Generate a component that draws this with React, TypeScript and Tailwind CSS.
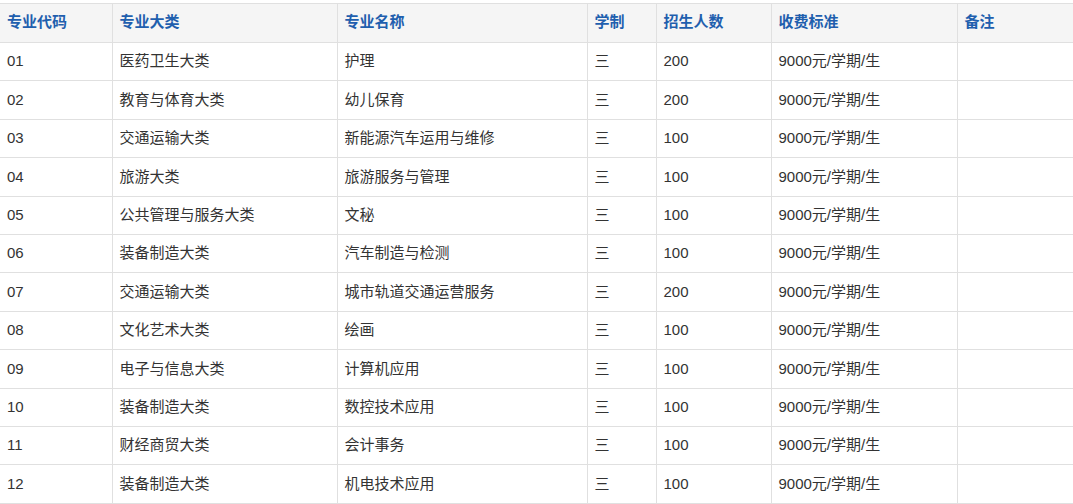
const rows = [
  ["01","医药卫生大类","护理","200"],
  ["02","教育与体育大类","幼儿保育","200"],
  ["03","交通运输大类","新能源汽车运用与维修","100"],
  ["04","旅游大类","旅游服务与管理","100"],
  ["05","公共管理与服务大类","文秘","100"],
  ["06","装备制造大类","汽车制造与检测","100"],
  ["07","交通运输大类","城市轨道交通运营服务","200"],
  ["08","文化艺术大类","绘画","100"],
  ["09","电子与信息大类","计算机应用","100"],
  ["10","装备制造大类","数控技术应用","100"],
  ["11","财经商贸大类","会计事务","100"],
  ["12","装备制造大类","机电技术应用","100"],
];
const widths = [112,225,250,69,115,186,116];
const heads = ["专业代码","专业大类","专业名称","学制","招生人数","收费标准","备注"];
export default function App() {
  return (
    <div className="w-[1073px] h-[504px] bg-white pt-[3px] overflow-hidden" style={{fontFamily:'"Liberation Sans", "Noto Sans CJK SC", sans-serif'}}>
      <table className="border-collapse table-fixed w-[1073px] text-[15px]">
        <colgroup>{widths.map((w,i)=><col key={i} style={{width:w}}/>)}</colgroup>
        <thead>
          <tr className="h-[39px] bg-[#f5f5f5]">
            {heads.map((h,i)=><th key={i} className={`text-left font-bold text-[#1f5fae] px-[7px] pb-[2px] border border-[#e0e0e0] ${i===0?"border-l-0":""} ${i===6?"border-r-0":""}`}>{h}</th>)}
          </tr>
        </thead>
        <tbody>
          {rows.map(r=>{
            const cells=[r[0],r[1],r[2],"三",r[3],"9000元/学期/生",""];
            return <tr key={r[0]} className="h-[38.4px]">
              {cells.map((c,i)=><td key={i} className={`px-[7px] text-[#333] border border-[#e0e0e0] ${i===0?"border-l-0":""} ${i===6?"border-r-0":""}`}>{c}</td>)}
            </tr>;
          })}
        </tbody>
      </table>
    </div>
  );
}
